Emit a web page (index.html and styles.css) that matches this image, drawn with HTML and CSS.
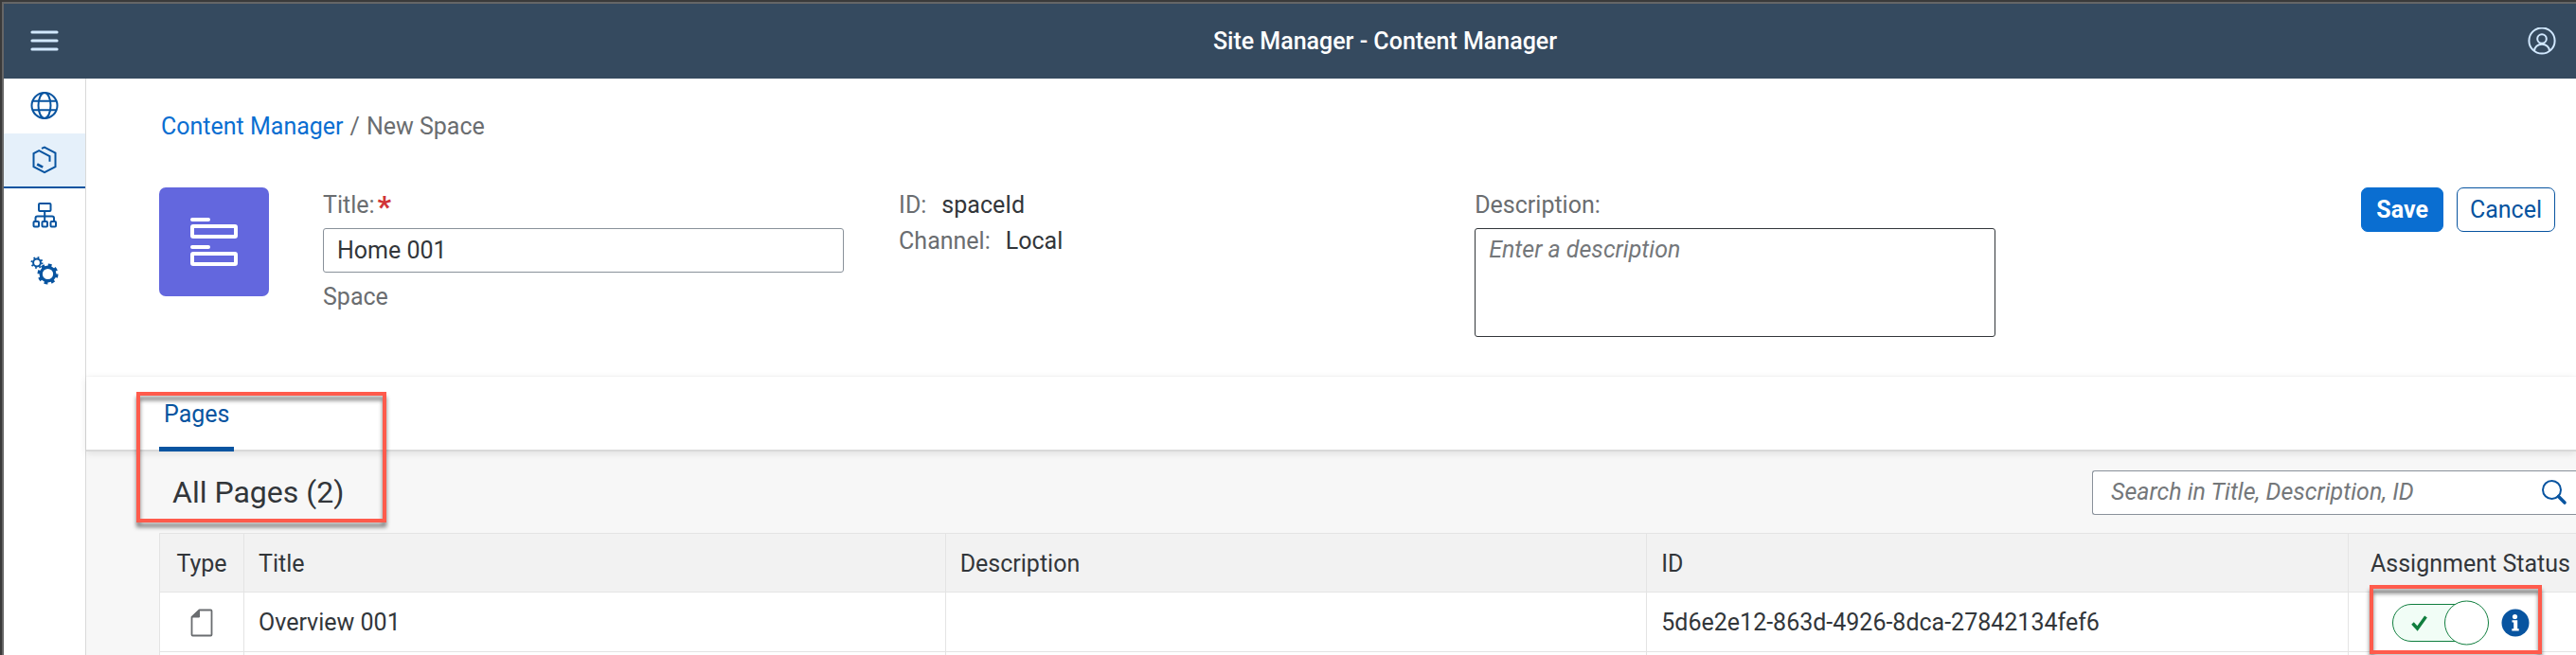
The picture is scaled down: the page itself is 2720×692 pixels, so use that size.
FILE: index.html
```html
<!DOCTYPE html>
<html lang="en">
<head>
<meta charset="utf-8">
<title>Site Manager - Content Manager</title>
<link rel="stylesheet" href="styles.css">
</head>
<body>
<div class="app">
  <header class="shell">
    <button class="icon-button" type="button" aria-label="Menu">
      <svg width="30" height="26" viewBox="0 0 30 26" fill="none" stroke="#d1e8ff" stroke-width="3.2" stroke-linecap="round"><path d="M2 3h26M2 12h26M2 21h26"/></svg>
    </button>
    <h1 class="shell-title">Site Manager - Content Manager</h1>
    <button class="icon-button" type="button" aria-label="User">
      <svg width="30" height="30" viewBox="0 0 30 30" fill="none" stroke="#d1e8ff" stroke-width="2"><circle cx="15" cy="14" r="13.6"/><circle cx="15" cy="12" r="4.8"/><path d="M7 25c0-4.400 3.600-7.200 8-7.200s8 2.800 8 7.200"/></svg>
    </button>
  </header>
  <div class="body">
    <nav class="side">
      <a class="side-item" href="#" aria-label="Sites">
        <svg width="30" height="30" viewBox="0 0 30 30" fill="none" stroke="#0854a0" stroke-width="2"><circle cx="15" cy="14.500" r="13.500"/><ellipse cx="15" cy="14.500" rx="6.500" ry="13.500"/><path d="M2.500 9.800h25M2.500 19.200h25"/></svg>
      </a>
      <a class="side-item active" href="#" aria-label="Content">
        <svg width="30" height="30" viewBox="0 0 30 30" fill="none" stroke="#0854a0" stroke-width="2"><path d="M12 2.800 15 1.500l11.500 6.100v14.600L15 28.200 3.500 22.200V8.200L9.200 5.200 20.500 11V16.800"/><path d="M7.200 19.500l6 3.200" stroke-width="2.600"/></svg>
      </a>
      <a class="side-item" href="#" aria-label="Channels">
        <svg width="30" height="30" viewBox="0 0 30 30" fill="none" stroke="#0854a0" stroke-width="2"><rect x="9" y="2" width="12.500" height="8" rx="1"/><path d="M15.200 10v11M5.500 20.500v-3q0-2 2-2h15.500q2 0 2 2v3"/><rect x="3.500" y="21" width="5.500" height="5.500" rx="1"/><rect x="12.500" y="21" width="5.500" height="5.500" rx="1"/><rect x="21.500" y="21" width="5.500" height="5.500" rx="1"/></svg>
      </a>
      <a class="side-item" href="#" aria-label="Settings">
        <svg width="30" height="30" viewBox="0 0 30 30" fill="none" stroke="#0854a0"><circle cx="7" cy="6.500" r="3.900" stroke-width="2"/><circle cx="7" cy="6.500" r="5.500" stroke-width="2" stroke-dasharray="1.730 2.590"/><circle cx="18.500" cy="18.500" r="7.300" stroke-width="3.400"/><circle cx="18.500" cy="18.500" r="9.500" stroke-width="3" stroke-dasharray="3.730 3.730"/></svg>
      </a>
    </nav>
    <main class="main">
      <section class="object">
        <div class="crumbs"><a href="#">Content Manager</a><span>/</span><span class="current">New Space</span></div>
        <div class="object-row">
          <div class="tile">
            <svg width="52" height="54" viewBox="0 0 52 54" fill="none" stroke="#fff" stroke-width="4" stroke-linecap="round"><path d="M3 3h17M3 32h17"/><rect x="3" y="10" width="46" height="11" rx="1"/><rect x="3" y="39" width="46" height="11" rx="1"/></svg>
          </div>
          <div class="fields">
            <div class="field">
              <label for="title">Title:<span class="req">*</span></label>
              <input id="title" class="box" type="text" value="Home 001">
              <span class="kind">Space</span>
            </div>
            <dl class="facts">
              <div><dt>ID:</dt><dd>spaceId</dd></div>
              <div><dt>Channel:</dt><dd>Local</dd></div>
            </dl>
            <div class="field">
              <label for="desc">Description:</label>
              <textarea id="desc" class="box area" placeholder="Enter a description"></textarea>
            </div>
          </div>
          <div class="actions">
            <button class="btn primary" type="button">Save</button>
            <button class="btn" type="button">Cancel</button>
          </div>
        </div>
      </section>
      <div class="tabs">
        <a class="tab" href="#">Pages</a>
        <div class="mark mark-heading"></div>
      </div>
      <section class="pages">
        <div class="toolbar">
          <h2>All Pages (2)</h2>
          <div class="search">
            <input type="search" aria-label="Search" placeholder="Search in Title, Description, ID">
            <button type="button" aria-label="Start search">
              <svg width="28" height="28" viewBox="0 0 28 28" fill="none" stroke="#0854a0" stroke-linecap="round"><circle cx="11.500" cy="11.500" r="9.500" stroke-width="2"/><path d="M18.500 18.500l6.500 6.500" stroke-width="3.600"/></svg>
            </button>
          </div>
        </div>
        <table>
          <thead>
            <tr><th class="c-type">Type</th><th>Title</th><th>Description</th><th>ID</th><th class="status">Assignment Status</th></tr>
          </thead>
          <tbody>
            <tr>
              <td class="c-type"><svg class="doc" width="24" height="30" viewBox="0 0 24 30" fill="none" stroke="#6a6d70" stroke-width="1.800" stroke-linejoin="round"><path d="M9.500 1.500H21.500q1 0 1 1V27.500q0 1-1 1H2.500q-1 0-1-1V9z"/><path d="M9.500 1.500V9h-8z" fill="#6a6d70" stroke-width="1"/></svg></td>
              <td>Overview 001</td>
              <td></td>
              <td>5d6e2e12-863d-4926-8dca-27842134fef6</td>
              <td class="status">
                <div class="assign">
                  <label class="switch">
                    <input type="checkbox" checked aria-label="Assigned">
                    <svg width="102" height="48" viewBox="0 0 102 48" fill="none" stroke="#107e3e" stroke-width="1"><rect x=".5" y="4.500" width="92" height="39" rx="19.500" fill="#f1fdf6"/><circle cx="78.500" cy="24" r="23" fill="#fff"/><path d="M21.500 24.500l5 5.500 9-12.500" stroke-width="3.400"/></svg>
                  </label>
                  <button class="info" type="button" aria-label="Information">
                    <svg width="30" height="30" viewBox="0 0 30 30"><circle cx="15" cy="15" r="14.500" fill="#0854a0"/><circle cx="14.500" cy="8.500" r="2.600" fill="#fff"/><path d="M11.500 12.300h5.700v9h1.500V23.500h-7.400v-2.200h1.900v-6.800h-1.700z" fill="#fff"/></svg>
                  </button>
                  <div class="mark mark-status"></div>
                </div>
              </td>
            </tr>
            <tr><td></td><td></td><td></td><td></td><td></td></tr>
          </tbody>
        </table>
      </section>
    </main>
  </div>
</div>
</body>
</html>
```
FILE: styles.css
```css
* { box-sizing: border-box; }

body {
  margin: 0;
  background: #3a3a3a;
  color: #32363a;
  font: 25px/32px Roboto, "Liberation Sans", sans-serif;
}

a { color: inherit; text-decoration: none; }
svg { display: block; }
input, textarea, button { font: inherit; color: inherit; }

.app {
  display: flex;
  flex-direction: column;
  height: 100vh;
  overflow: hidden;
  border: solid #3a3a3a;
  border-width: 2px 0 0 2px;
}

.shell {
  display: flex;
  align-items: center;
  flex: none;
  height: 81px;
  padding: 0 21px 0 28px;
  background: #354a5f;
  border: solid #666;
  border-width: 2px 0 0 2px;
}

.shell-title {
  flex: 1;
  margin: 0;
  padding-left: 194px;
  color: #fff;
  font-size: 25px;
  font-weight: 500;
  line-height: 32px;
  text-align: center;
}

.icon-button {
  padding: 0;
  border: 0;
  background: none;
}

.body {
  display: flex;
  flex: 1;
  min-height: 0;
  border-left: 2px solid #666;
  background: #fff;
}

.side {
  flex: none;
  width: 87px;
  border-right: 1px solid #d9d9d9;
}

.side-item {
  display: flex;
  align-items: center;
  justify-content: center;
  height: 58px;
}

.side-item.active {
  background: #e5f0fa;
  border-bottom: 2px solid #0854a0;
}

.main {
  display: flex;
  flex-direction: column;
  flex: 1;
  min-width: 0;
}

.object {
  flex: none;
  height: 315px;
  padding: 35px 22px 0 77px;
  border-bottom: 1px solid #fafafa;
}

.crumbs {
  display: flex;
  gap: 7px;
  margin-bottom: 48px;
  padding-left: 2px;
  color: #6a6d70;
}

.crumbs a { color: #0a6ed1; }

.object-row { display: flex; }

.tile {
  display: flex;
  align-items: center;
  justify-content: center;
  flex: none;
  width: 116px;
  height: 115px;
  border-radius: 7px;
  background: #6367de;
}

.fields {
  display: grid;
  grid-template-columns: repeat(3, 1fr);
  gap: 58px;
  flex: 1;
  margin-left: 57px;
  padding-right: 386px;
}

.field {
  display: flex;
  flex-direction: column;
  padding-top: 3px;
  color: #6a6d70;
}

.req {
  margin-left: 3px;
  color: #d13438;
  font-size: 32px;
  font-weight: 700;
  line-height: 24px;
  vertical-align: -4px;
}

.box {
  width: 100%;
  height: 47px;
  margin-top: 8px;
  padding: 0 14px;
  border: 1px solid #89919a;
  border-radius: 3px;
  background: #fff;
  color: #32363a;
}

.area {
  height: 115px;
  padding-top: 6px;
  border-color: #32363a;
  resize: none;
}

::placeholder {
  color: #74777a;
  font-style: italic;
  opacity: 1;
}

.kind { margin-top: 10px; }

.facts {
  margin: 0;
  padding-top: 3px;
}

.facts div {
  display: flex;
  gap: 16px;
  margin-bottom: 6px;
}

.facts dt { color: #6a6d70; }
.facts dd { margin: 0; }

.actions {
  display: flex;
  align-items: flex-start;
  gap: 14px;
}

.btn {
  height: 47px;
  padding: 0 13px;
  border: 1px solid #0854a0;
  border-radius: 7px;
  background: #fff;
  color: #0854a0;
}

.btn.primary {
  padding: 0 15px;
  border-color: #0a6ed1;
  background: #0a6ed1;
  color: #fff;
  font-weight: 700;
}

.tabs {
  position: relative;
  flex: none;
  z-index: 1;
  height: 79px;
  padding-left: 77px;
  border-bottom: 2px solid #d9d9d9;
  box-shadow: 0 2px 8px rgba(0, 0, 0, 0.1);
}

.tab {
  display: inline-block;
  height: 79px;
  padding: 24px 5px 0;
  color: #0854a0;
  background: linear-gradient(#0854a0, #0854a0) bottom / 100% 5px no-repeat;
}

.mark {
  position: absolute;
  border: 4px solid #ff5b4c;
  filter: drop-shadow(0 5px 2px rgba(0, 0, 0, 0.5));
  pointer-events: none;
}

.mark-heading {
  top: 16px;
  left: 53px;
  width: 264px;
  height: 138px;
}

.pages {
  flex: 1;
  padding-left: 77px;
  background: #f7f7f7;
}

.toolbar {
  display: flex;
  align-items: center;
  justify-content: space-between;
  height: 86px;
  padding: 0 0 0 14px;
}

h2 {
  margin: 0;
  font-size: 32px;
  font-weight: 400;
  line-height: 40px;
}

.search {
  display: flex;
  align-items: center;
  width: 511px;
  height: 47px;
  padding: 0 9px 0 19px;
  border: 1px solid #89919a;
  border-right: 0;
  border-radius: 3px 0 0 3px;
  background: #fff;
}

.search input {
  flex: 1;
  min-width: 0;
  padding: 0;
  border: 0;
  background: none;
}

.search button {
  padding: 0;
  border: 0;
  background: none;
}

table {
  width: 100%;
  table-layout: fixed;
  border-spacing: 0;
  border-top: 1px solid #e4e4e4;
  border-left: 1px solid #e4e4e4;
  background: #fff;
}

th, td {
  height: 63px;
  padding: 2px 0 0 15px;
  border: solid #e4e4e4;
  border-width: 0 1px 1px 0;
  text-align: left;
}

th {
  height: 62px;
  background: #f2f2f2;
  font-weight: 400;
}

th:last-child, td:last-child { border-right: 0; }

.c-type {
  width: 89px;
  padding-left: 0;
  text-align: center;
}

.doc { margin: 0 auto; }

.status {
  width: 240px;
  padding-left: 23px;
}

.assign {
  position: relative;
  display: flex;
  align-items: center;
  gap: 13px;
  padding-left: 23px;
}

.switch { position: relative; }

.switch input {
  position: absolute;
  inset: 0;
  margin: 0;
  opacity: 0;
}

.info {
  padding: 0;
  border: 0;
  background: none;
}

.mark-status {
  top: -16px;
  left: -1px;
  width: 182px;
  height: 73px;
}
```
